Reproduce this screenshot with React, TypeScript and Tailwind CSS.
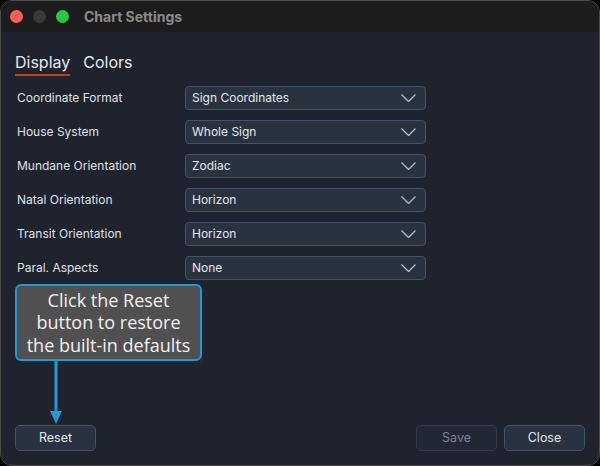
const rows = [
  ["Coordinate Format", "Sign Coordinates"],
  ["House System", "Whole Sign"],
  ["Mundane Orientation", "Zodiac"],
  ["Natal Orientation", "Horizon"],
  ["Transit Orientation", "Horizon"],
  ["Paral. Aspects", "None"],
];

function Chevron() {
  return (
    <svg width="15" height="8" viewBox="0 0 15 8" fill="none">
      <polyline points="0.5,0.5 7.5,7.5 14.5,0.5" stroke="#b5bac4" strokeWidth="1.3" />
    </svg>
  );
}

export default function App() {
  return (
    <div className="w-[600px] h-[466px] bg-black font-['Inter',sans-serif]">
      <div className="relative w-full h-full rounded-[12px] border border-[#4a4a4a] overflow-hidden bg-[#1f232d] flex flex-col">
        {/* title bar */}
        <div className="h-[31px] bg-[#1c1c1d] flex items-center pl-[9px] shrink-0">
          <span className="w-[13px] h-[13px] rounded-full bg-[#fe5f57]" />
          <span className="w-[13px] h-[13px] rounded-full bg-[#3b3b3c] ml-[10px]" />
          <span className="w-[13px] h-[13px] rounded-full bg-[#2ac840] ml-[10px]" />
          <span className="ml-[15px] text-[14px] font-bold text-[#8b8b8b]">Chart Settings</span>
        </div>

        {/* tabs */}
        <div className="flex gap-[13px] pl-[14px] pt-[20px] shrink-0">
          <div className="flex flex-col">
            <span className="text-[16px] leading-[20px] text-[#e6e8ec]">Display</span>
            <span className="mt-[2px] h-[2px] bg-[#c2410c]" />
          </div>
          <span className="text-[16px] leading-[20px] text-[#e6e8ec]">Colors</span>
        </div>

        {/* form */}
        <div className="flex flex-col gap-[10px] pl-[16px] pt-[10px] shrink-0">
          {rows.map(([label, value]) => (
            <div key={label} className="flex items-center h-[24px]">
              <span className="w-[168px] text-[12px] text-[#dfe2e7]">{label}</span>
              <div className="w-[241px] h-[24px] rounded-[4px] border border-[#46526a] bg-[#29323f] flex items-center justify-between pl-[6px] pr-[9px]">
                <span className="text-[12px] text-[#e6e8ec]">{value}</span>
                <Chevron />
              </div>
            </div>
          ))}
        </div>

        {/* callout */}
        <div className="flex flex-col items-start pl-[14px] pt-[4px] shrink-0">
          <div className="w-[187px] h-[77px] rounded-[6px] border-2 border-[#1e9ad6] bg-[#505050] flex items-center justify-center text-center font-['Open_Sans',sans-serif] text-[18px] leading-[22.5px] text-[#f0f0f0]">
            <span>
              Click the Reset
              <br />
              button to restore
              <br />
              the built-in defaults
            </span>
          </div>
          <svg width="20" height="64" className="ml-[31px]" viewBox="0 0 20 64">
            <line x1="10" y1="0" x2="10" y2="52" stroke="#1e9ad6" strokeWidth="3" />
            <polygon points="4,50 16,50 10,63" fill="#1e9ad6" />
          </svg>
        </div>

        {/* footer */}
        <div className="mt-auto flex items-center px-[14px] pb-[15px]">
          <button className="w-[81px] h-[26px] rounded-[5px] border border-[#46526a] bg-[#29323f] text-[12.5px] text-[#e6e8ec]">
            Reset
          </button>
          <div className="ml-auto flex gap-[7px]">
            <button className="w-[81px] h-[26px] rounded-[5px] border border-[#333b49] bg-[#222833] text-[12.5px] text-[#7d838d]">
              Save
            </button>
            <button className="w-[81px] h-[26px] rounded-[5px] border border-[#46526a] bg-[#29323f] text-[12.5px] text-[#e6e8ec]">
              Close
            </button>
          </div>
        </div>
      </div>
    </div>
  );
}
